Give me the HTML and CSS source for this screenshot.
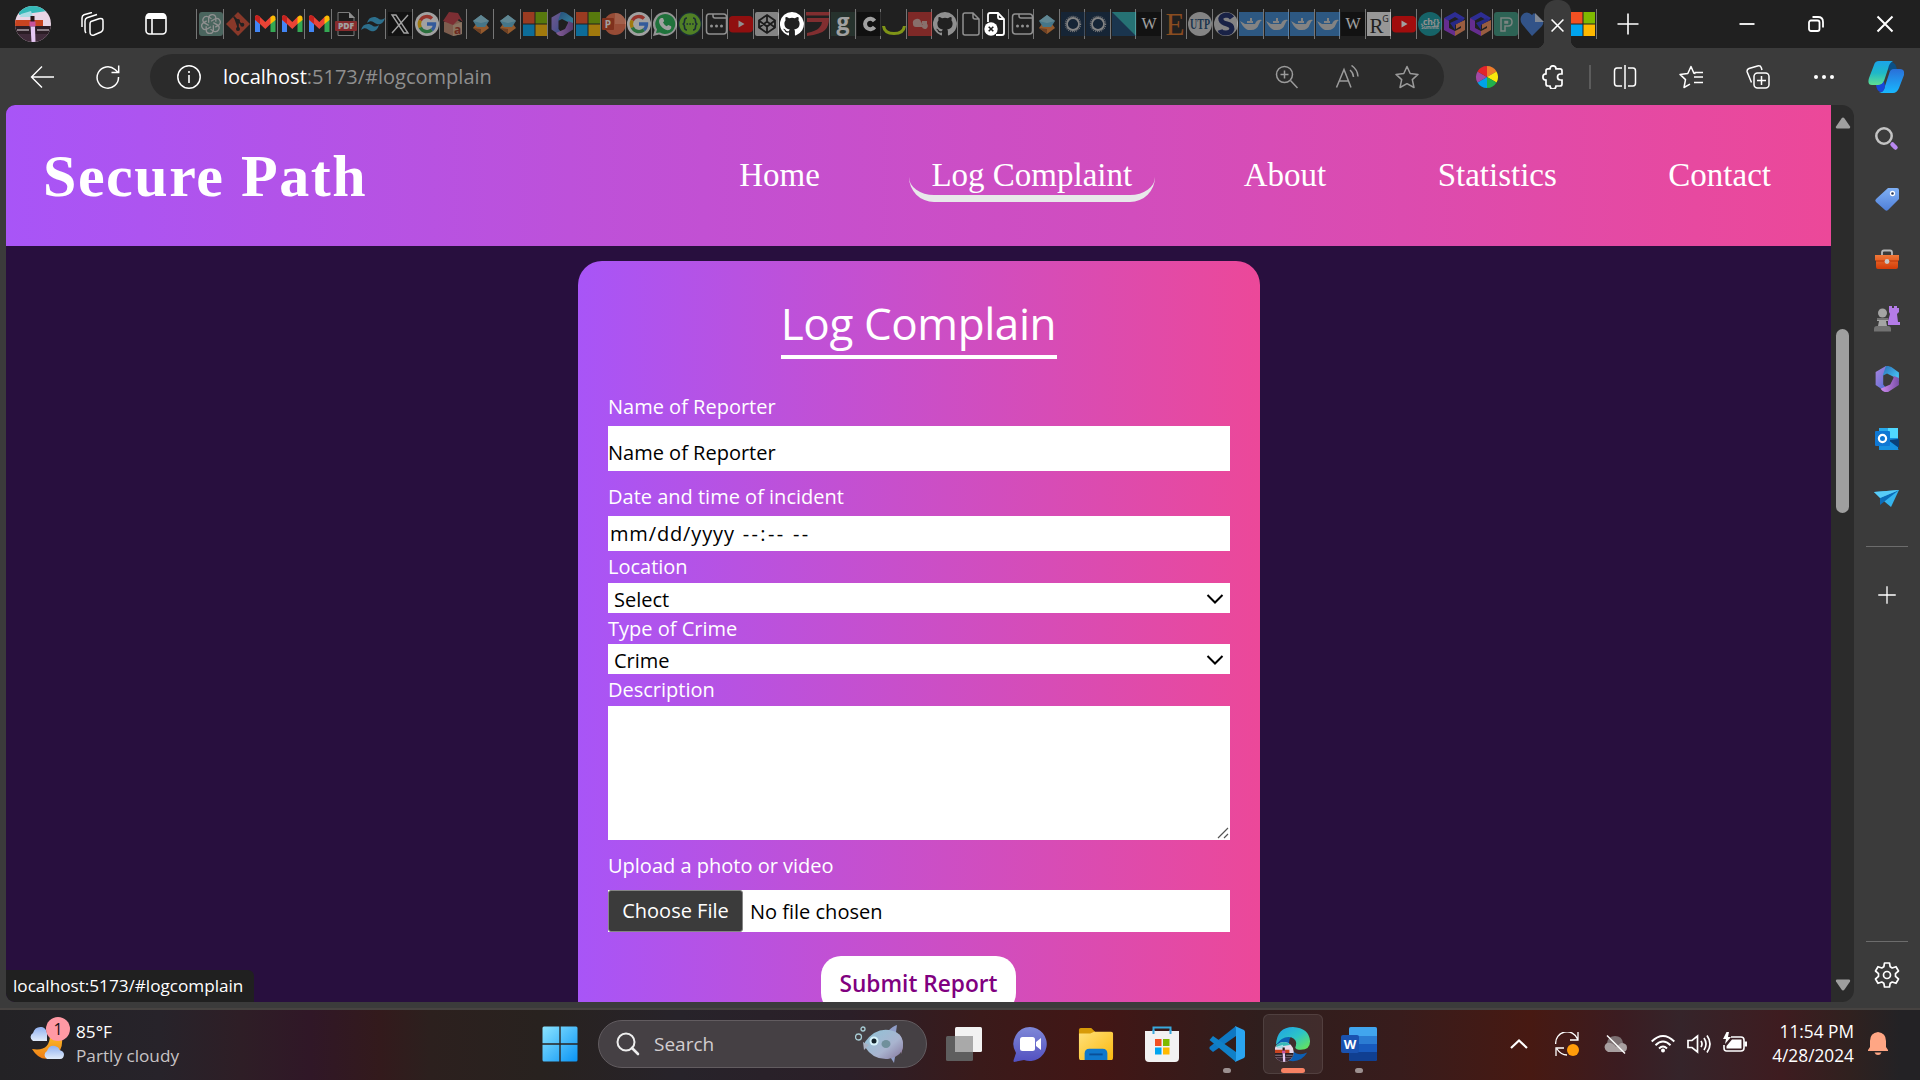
FILE: index.html
```html
<!DOCTYPE html>
<html lang="en">
<head>
<meta charset="utf-8">
<title>Secure Path</title>
<link rel="stylesheet" href="styles.css">
</head>
<body>
<svg class="defs" width="0" height="0" aria-hidden="true">
  <defs>
    <clipPath id="cp"><circle cx="18" cy="18" r="18"/></clipPath>
    <linearGradient id="g-purple" x1="0" y1="0" x2="1" y2="1"><stop offset="0" stop-color="#a884e0"/><stop offset=".5" stop-color="#7f78d8"/><stop offset="1" stop-color="#2f6fd8"/></linearGradient>
    <linearGradient id="g-cyan" x1="0" y1="0" x2="1" y2="1"><stop offset="0" stop-color="#2a6fb8"/><stop offset="1" stop-color="#4bd3ff"/></linearGradient>
    <linearGradient id="g-violet" x1="0" y1="0" x2="1" y2="0"><stop offset="0" stop-color="#d08cf0"/><stop offset="1" stop-color="#7a4fa8"/></linearGradient>
    <linearGradient id="g-tag" x1="0" y1="0" x2="0" y2="1"><stop offset="0" stop-color="#7fb0f5"/><stop offset="1" stop-color="#4f7fd8"/></linearGradient>
    <linearGradient id="g-box" x1="0" y1="0" x2="0" y2="1"><stop offset="0" stop-color="#f07838"/><stop offset="1" stop-color="#d23c08"/></linearGradient>
    <linearGradient id="g-cop1" x1="0" y1="0" x2="0" y2="1"><stop offset="0" stop-color="#1ba4ea"/><stop offset=".5" stop-color="#1fb8c8"/><stop offset="1" stop-color="#5fe090"/></linearGradient>
    <linearGradient id="g-cop2" x1="0" y1="0" x2="0" y2="1"><stop offset="0" stop-color="#2a6fd8"/><stop offset="1" stop-color="#18b8ff"/></linearGradient>
    <linearGradient id="g-win" x1="0" y1="0" x2="1" y2="1"><stop offset="0" stop-color="#8be4ff"/><stop offset="1" stop-color="#0a94f5"/></linearGradient>
    <linearGradient id="g-chat" x1="0" y1="0" x2="0" y2="1"><stop offset="0" stop-color="#7f88d8"/><stop offset="1" stop-color="#5250c0"/></linearGradient>
    <linearGradient id="g-folder" x1="0" y1="0" x2="1" y2="1"><stop offset="0" stop-color="#ffe07a"/><stop offset="1" stop-color="#fbb90e"/></linearGradient>
    <linearGradient id="g-edge" x1="0" y1="0" x2="1" y2="1"><stop offset="0" stop-color="#1e9fe8"/><stop offset=".5" stop-color="#2cc4c8"/><stop offset="1" stop-color="#6fe84a"/></linearGradient>
    <linearGradient id="g-cloud" x1="0" y1="0" x2="0" y2="1"><stop offset="0" stop-color="#8fb0f0"/><stop offset="1" stop-color="#e0ebfa"/></linearGradient>
    <linearGradient id="g-moon" x1="0" y1="0" x2="0" y2="1"><stop offset="0" stop-color="#fcc02c"/><stop offset="1" stop-color="#f07d14"/></linearGradient>
    <linearGradient id="g-fish" x1="0" y1="0" x2="1" y2="1"><stop offset="0" stop-color="#8fc4d8"/><stop offset=".6" stop-color="#a9b4cf"/><stop offset="1" stop-color="#84769c"/></linearGradient>
  </defs>
</svg>
<svg class="symbols" aria-hidden="true">
  <symbol id="avatar" viewBox="0 0 36 36"><g clip-path="url(#cp)"><path fill="#e9d6e6" d="M0 0h36v36H0z"/><path fill="#35b9b8" d="M4 0h28v5L4 9z"/><path fill="#a9dbe4" d="M6 8l10-3 2 6H5z"/><path fill="#c74420" d="M0 14h28v6H0z"/><path fill="#2b1d25" d="M0 20h36v8H0z"/><path fill="#8a7f86" d="M2 23h12v2H2zM22 23h12v2H22z"/><path fill="#402b3a" d="M0 28h36v8H0z"/><path fill="#2a1718" d="M15.500 10h4v6h-4z"/><path fill="#c9529a" d="M14.500 15.500h6v5h-6z"/><path fill="#e6c8f4" d="M15.500 20.500h4.500l.5 15.500h-4z"/></g></symbol>
  <symbol id="gpt" viewBox="0 0 24 24"><rect width="24" height="24" rx="3" fill="#74aa9c"/><g fill="none" stroke="#fff" stroke-width="1.3"><path id="petal" d="M12 9.3l4.3-2.5a3.6 3.6 0 0 1 3.4 6.3l-3.4 2"/><use href="#petal" transform="rotate(60 12 12)"/><use href="#petal" transform="rotate(120 12 12)"/><use href="#petal" transform="rotate(180 12 12)"/><use href="#petal" transform="rotate(240 12 12)"/><use href="#petal" transform="rotate(300 12 12)"/></g></symbol>
  <symbol id="git" viewBox="0 0 24 24"><path fill="#f05033" d="M12 0l12 12-12 12L0 12z"/><g stroke="#222" stroke-width="1.7" fill="#222"><path d="M7.500 4.500L12 9v8M12 9l4 4"/><circle cx="12" cy="9" r="1.2"/><circle cx="12" cy="17" r="1.2"/><circle cx="16.3" cy="12.8" r="1.2"/></g></symbol>
  <symbol id="gmail" viewBox="0 0 24 24"><path fill="#4285f4" d="M2 7v13h5V11z"/><path fill="#34a853" d="M22.500 7v13h-5V11z"/><path fill="#ea4335" d="M2 8V5c0-2 2-2 4-1l6.300 6 6.200-6v7l-6.200 6L7 12z"/><path fill="#c5221f" d="M2 7.500V6c0-3 3-3 5-1v7z"/><path fill="#fbbc04" d="M17.500 5c2-2.500 5-2 5 1v2l-5 4z"/></symbol>
  <symbol id="pdf" viewBox="0 0 24 24"><path fill="#181818" stroke="#bbb" d="M4 .5h11l5 5v18H4z"/><path fill="#ddd" d="M15 0v6h6z"/><rect x="1" y="9" width="22" height="10" rx="1" fill="#d03438"/><text x="12" y="17" font-family="Open Sans" font-size="8.500" font-weight="800" fill="#fff" text-anchor="middle">PDF</text></symbol>
  <symbol id="tailwind" viewBox="0 0 24 24"><path fill="#38bdf8" d="M6 11q1.500-6 7-6c5 0 5 5 11 1-1.500 6-6 7-8 6-4-1-5-5-10-1zM0 18q1.500-6 7-6c5 0 5 5 11 1-1.500 6-6 7-8 6-4-1-5-5-10-1z"/></symbol>
  <symbol id="x" viewBox="0 0 24 24"><path fill="#080808" d="M0 0h24v24H0z"/><path fill="none" stroke="#fff" stroke-width="1.400" d="M4 3h4l12 18h-4zM20 3L4 21"/></symbol>
  <symbol id="google" viewBox="0 0 24 24"><circle cx="12" cy="12" r="12" fill="#fff"/><g fill="none" stroke-width="3.400"><path stroke="#ea4335" d="M5.300 8.500A7.500 7.500 0 0 1 17 6.500"/><path stroke="#fbbc05" d="M5.300 8.400a7.500 7.500 0 0 0 0 7.200"/><path stroke="#34a853" d="M5.300 15.500A7.500 7.500 0 0 0 17 17.700"/><path stroke="#4285f4" d="M12 12h7.500q0 3.800-2.600 5.800"/></g></symbol>
  <symbol id="house" viewBox="0 0 24 24"><path fill="#d99a7c" d="M2 10l10-4 8 5v11l-9 2-9-4z"/><path fill="#f2c4a0" d="M11 13l9-3v12l-9 2z"/><path fill="#d83c46" d="M1 9L7 0l9 1 5 9-4-3-6 6z"/><text x="15.500" y="22" font-family="Open Sans" font-size="12" font-weight="700" fill="#b8331e" text-anchor="middle">a</text></symbol>
  <symbol id="stack" viewBox="0 0 24 24"><path fill="#e88437" d="M4 16l3-4h10l3 4-8 6z"/><path fill="#a85a28" d="M4 16l8 1v5z"/><path fill="#63b4d4" d="M4 9l8-6 8 6-4 6H8z"/><path fill="#8fd0e4" d="M4 9l8-6 8 6-8 2z"/></symbol>
  <symbol id="ms" viewBox="0 0 24 24"><path fill="#f25022" d="M0 0h11.500v11.500H0z"/><path fill="#7fba00" d="M12.500 0H24v11.500H12.500z"/><path fill="#00a4ef" d="M0 12.500h11.500V24H0z"/><path fill="#ffb900" d="M12.500 12.500H24V24H12.500z"/></symbol>
  <symbol id="m365" viewBox="0 0 24 24"><path fill="url(#g-purple)" d="M11 0L1.500 5.500v12L8 22l3-2-2.500-3V8L14 5z"/><path fill="url(#g-cyan)" d="M11 0q2-.5 5 1l7 5v8l-5-4-6-3-4 2z"/><path fill="url(#g-violet)" d="M23 11v6.500L13 24q-4 1-7-3l9-4 3-6V9z"/></symbol>
  <symbol id="ppt" viewBox="0 0 24 24"><circle cx="13" cy="12" r="11" fill="#ed6c47"/><path fill="#ff8f6b" d="M13 1a11 11 0 0 1 11 11H13z"/><rect y="6" width="12" height="12" rx="1" fill="#c43e1c"/><text x="6" y="15.700" font-family="Open Sans" font-size="10" font-weight="700" fill="#fff" text-anchor="middle">P</text></symbol>
  <symbol id="whatsapp" viewBox="0 0 24 24"><path fill="#e8e8e8" d="M12 0a12 12 0 1 1-6 22.400L0 24l1.600-6A12 12 0 0 1 12 0z"/><path fill="#1fae50" d="M12 2a10 10 0 1 1-5 18.500L3 21l1-3.500A10 10 0 0 1 12 2z"/><path fill="#fff" d="M8 6l2 0 1.200 3-1.200 1.500q1.200 2.500 3.700 3.700L15.200 13l3 1.300v2q-1 2-3.500 2C10 17.500 6 13 6 9q0-2 2-3z"/></symbol>
  <symbol id="swagger" viewBox="0 0 24 24"><circle cx="12" cy="12" r="12" fill="#173647"/><circle cx="12" cy="12" r="10.700" fill="#74c629"/><path fill="none" stroke="#173647" stroke-width="1.600" d="M9 6q-2.500 0-2.500 3t-2 3q2 0 2 3t2.500 3M15 6q2.500 0 2.500 3t2 3q-2 0-2 3T15 18"/><path stroke="#173647" stroke-width="1.600" stroke-dasharray="1.600 1.200" d="M8.500 12h8"/></symbol>
  <symbol id="tabdots" viewBox="0 0 24 24"><g fill="none" stroke="#fff" stroke-width="1.500"><path d="M9 2H5Q2.500 2 2.500 5v14q0 3 3 3h14q3 0 3-3V5q0-3-3-3H9v2q0 2 2 2h11"/></g><g fill="#fff"><circle cx="7.500" cy="14" r="1.500"/><circle cx="12.500" cy="14" r="1.500"/><circle cx="17.500" cy="14" r="1.500"/></g></symbol>
  <symbol id="youtube" viewBox="0 0 24 24"><rect y="4" width="24" height="16.500" rx="4" fill="#f00"/><path fill="#fff" d="M9.500 8.500v7l6-3.500z"/></symbol>
  <symbol id="codepen" viewBox="0 0 24 24"><rect width="24" height="24" rx="2" fill="#e8e8e8"/><path fill="none" stroke="#181818" stroke-width="1.800" d="M12 3l8 5.500v7L12 21l-8-5.500v-7zM12 3v6M12 21v-6M4 8.500l8 6 8-6M4 15.500l8-6 8 6"/></symbol>
  <symbol id="github" viewBox="0 0 24 24"><path fill="#fff" d="M12 0a12 12 0 0 0-3.800 23.400c.6.1.8-.3.8-.6v-2.200c-3.300.7-4-1.400-4-1.400-.5-1.400-1.300-1.800-1.300-1.800-1.100-.7.100-.7.100-.7 1.200.1 1.800 1.200 1.800 1.200 1.100 1.800 2.800 1.300 3.500 1 .1-.8.400-1.300.8-1.600-2.700-.3-5.500-1.300-5.500-5.900 0-1.300.5-2.400 1.200-3.200-.1-.3-.5-1.500.1-3.200 0 0 1-.3 3.300 1.200a11.500 11.500 0 0 1 6 0C17.300 4.700 18.300 5 18.300 5c.7 1.700.3 2.900.1 3.200.8.800 1.200 1.900 1.200 3.200 0 4.600-2.800 5.600-5.500 5.900.4.400.8 1.100.8 2.200v3.300c0 .3.200.7.800.6A12 12 0 0 0 12 0z"/></symbol>
  <symbol id="stripe" viewBox="0 0 24 24"><path fill="#e23c40" d="M0 0h24l-1 3.500H0zM1 6h22q0 8-4 12t-18 6v-3q9-2 12-5t3-6H1z"/></symbol>
  <symbol id="gg" viewBox="0 0 24 24"><path fill="#2c3f37" d="M0 0h24v24H0z"/><text x="12" y="17.500" font-family="Open Sans" font-size="23" font-weight="700" fill="#fff" text-anchor="middle">g</text></symbol>
  <symbol id="cc" viewBox="0 0 24 24"><path fill="#050505" d="M0 0h24v24H0z"/><path fill="none" stroke="#fff" stroke-width="4" d="M17.500 9a5.200 5.200 0 1 0 0 6"/></symbol>
  <symbol id="smile" viewBox="0 0 24 24"><path fill="#c4e812" d="M0 14h3q1 6 9 6t9-6h3q-1 9-12 9T0 14z"/></symbol>
  <symbol id="blob" viewBox="0 0 24 24"><path fill="#dc322f" d="M0 0h24v24H0z"/><path fill="#efc0b8" d="M5 12a4 4 0 0 1 8-2q1 0 1 3a3 3 0 1 1 0 2H8q-3 0-3-3zM14 9h5v3h-5z"/></symbol>
  <symbol id="file" viewBox="0 0 24 24"><path fill="none" stroke="#fff" stroke-width="1.500" d="M6 1h8l6 6v14q0 2-2 2H6q-2 0-2-2V3q0-2 2-2zM14 1v4q0 2 2 2h4"/></symbol>
  <symbol id="filex" viewBox="0 0 24 24"><path fill="none" stroke="#fff" stroke-width="1.800" d="M4 10V3q0-2 2-2h8l6 6v14q0 2-2 2h-6M14 1v4q0 2 2 2h4"/><circle cx="7" cy="17" r="6.700" fill="#fff"/><path stroke="#222" stroke-width="1.600" d="M4.700 14.700l4.600 4.600M9.300 14.700l-4.600 4.600"/></symbol>
  <symbol id="ring" viewBox="0 0 24 24"><path fill="#0e2a4c" d="M0 0h24v24H0z"/><circle cx="12" cy="12" r="6" fill="none" stroke="#e8e8e8" stroke-width="1.800"/><circle cx="12" cy="12" r="7.600" fill="none" stroke="#d8d8d8" stroke-width="1.200" stroke-dasharray="1 1"/></symbol>
  <symbol id="tri" viewBox="0 0 24 24"><path fill="#154a7c" d="M0 0h24v24H0z"/><path fill="#2cc4c8" d="M0 0h24v24z"/></symbol>
  <symbol id="ww" viewBox="0 0 24 24"><path fill="#080808" d="M0 0h24v24H0z"/><text x="12" y="17" font-family="Liberation Serif" font-size="16" fill="#fff" text-anchor="middle">W</text></symbol>
  <symbol id="ee" viewBox="0 0 24 24"><text x="12" y="22.500" font-family="Liberation Serif" font-size="32" fill="#f47a20" text-anchor="middle" textLength="19" lengthAdjust="spacingAndGlyphs">E</text></symbol>
  <symbol id="utp" viewBox="0 0 24 24"><circle cx="12" cy="12" r="12" fill="#e8e8e8"/><text x="12" y="16.500" font-family="Liberation Serif" font-size="14" font-weight="700" fill="#174a78" text-anchor="middle" textLength="20" lengthAdjust="spacingAndGlyphs">UTP</text></symbol>
  <symbol id="ss" viewBox="0 0 24 24"><circle cx="12" cy="12" r="12" fill="#e8e8e8"/><path fill="none" stroke="#14246c" stroke-width="5" d="M18 6q-2-3-6-3-6 1-5 5 1 3 6 4t5 5q-1 4-6 4-5 0-6-3"/></symbol>
  <symbol id="docker" viewBox="0 0 24 24"><path fill="#3a90e4" d="M0 0h24v24H0z"/><path fill="#e6e6e6" d="M1 9l5 3h10q2-5 7-4-2 1-3 4-2 6-8 6H9q-4-1-8-9zM8 9h6v2H8zM11 6h2v3h-2z"/></symbol>
  <symbol id="rg" viewBox="0 0 24 24"><path fill="#eee" d="M0 0h24v24H0z"/><text x="9.500" y="21" font-family="Liberation Serif" font-size="21" fill="#222" text-anchor="middle">R</text><text x="18.500" y="10" font-family="Open Sans" font-size="9" fill="#222" text-anchor="middle">G</text></symbol>
  <symbol id="ch" viewBox="0 0 24 24"><circle cx="12" cy="12" r="12" fill="#0ea5b0"/><text x="12" y="12.500" font-family="Open Sans" font-size="8.500" font-weight="700" fill="#fff" text-anchor="middle">.ch{}</text><text x="12" y="17" font-family="Open Sans" font-size="4.500" font-weight="700" fill="#fff" text-anchor="middle">Summit</text></symbol>
  <symbol id="gcube" viewBox="0 0 24 24"><path fill="#3838e8" d="M12 0l10 6-3 3-7-4-7 4-4-3z"/><path fill="#9838e0" d="M1 6l5 3v7l6 3v5L1 18z"/><path fill="#f08a58" d="M12 19l6-3v-2l-5 3v-5l9-4v10l-10 6z"/><path fill="#2c30d0" d="M7 11l11-5 3 2-9 5v5z"/></symbol>
  <symbol id="pp" viewBox="0 0 24 24"><rect width="24" height="24" rx="3" fill="#3ba58b"/><path fill="none" stroke="#d8e8e2" stroke-width="1.500" d="M7 6h7q4 0 4 4t-4 4h-3v5H7zM11 9.500h2.500v1.500H11z"/></symbol>
  <symbol id="heart" viewBox="0 0 24 24"><path fill="#3f78d4" d="M12 24L2 12Q-1 7 2 3q5-5 10 0l2-2 9 9q1 1-1 4z"/><path fill="#c8d4e8" d="M15 1v9h9z"/></symbol>

  <symbol id="workspaces" viewBox="0 0 24 24"><g fill="none" stroke="#fff" stroke-width="1.500"><path d="M11 9.500l8-2.800q4-1 4 2.300v8q0 2-2 3l-7 3q-4 1-4-3v-8q0-2 1-2.500zM6 21q-1-1-1-3V9q0-2.500 2-3.300L17 2.500M2 15V6q0-2.500 2-3.300L12 .5"/></g></symbol>
  <symbol id="vtabs" viewBox="0 0 24 24"><rect x="2" y="2" width="20" height="20" rx="3.500" fill="none" stroke="#fff" stroke-width="1.600"/><path fill="#fff" d="M2 7V5q0-4 4-4h12q4 0 4 4v2z"/><path stroke="#fff" stroke-width="1.600" d="M8 7v15"/></symbol>
  <symbol id="back" viewBox="0 0 24 24"><path fill="none" stroke="#fff" stroke-width="1.400" d="M12 1.500L1.500 12 12 22.500M1.500 12H24"/></symbol>
  <symbol id="reload" viewBox="0 0 24 24"><path fill="none" stroke="#fff" stroke-width="1.500" d="M22.500 12A10.700 10.700 0 1 1 19 4.500l3 2.800M22.700.5v7H15.500"/></symbol>
  <symbol id="info" viewBox="0 0 24 24"><circle cx="12" cy="12" r="11.200" fill="none" stroke="#fff" stroke-width="1.500"/><path stroke="#fff" stroke-width="1.600" d="M12 10v8M12 6v2"/></symbol>
  <symbol id="zoomin" viewBox="0 0 24 24"><g fill="none" stroke="#9b9b9b" stroke-width="1.500"><circle cx="9.500" cy="9.500" r="8"/><path d="M15.500 15.500L22.500 23M9.500 5.500v8M5.500 9.500h8"/></g></symbol>
  <symbol id="aloud" viewBox="0 0 24 24"><path fill="none" stroke="#9b9b9b" stroke-width="1.500" d="M1.500 22.500L9 4.500l7 18M4.500 16h9M15 5q3.500 3 3.500 7M16.500.500q6 4 6.500 11"/></symbol>
  <symbol id="star" viewBox="0 0 24 24"><path fill="none" stroke="#9b9b9b" stroke-width="1.500" stroke-linejoin="round" d="M12 1.500l3.200 7 7.800.9-5.700 5.200L19 22.500 12 18.700 5 22.500l1.700-7.900L1 9.400l7.800-.9z"/></symbol>
  <symbol id="wheel" viewBox="0 0 24 24"><path fill="#ee7c2b" d="M12 12V1a11 11 0 0 1 9.500 5.500z"/><path fill="#fbe80c" d="M12 12l9.500-5.500a11 11 0 0 1 0 11z"/><path fill="#22b14c" d="M12 12l9.500 5.500A11 11 0 0 1 12 23z"/><path fill="#00a2e8" d="M12 12v11a11 11 0 0 1-9.500-5.500z"/><path fill="#a349a4" d="M12 12l-9.500 5.500a11 11 0 0 1 0-11z"/><path fill="#e2242c" d="M12 12L2.500 6.500A11 11 0 0 1 12 1z"/></symbol>
  <symbol id="puzzle" viewBox="0 0 24 24"><path fill="none" stroke="#fff" stroke-width="1.700" d="M9 3.800a3 3 0 0 1 6 0h4q2 0 2 2V9h-1.500a2.800 2.800 0 0 0 0 6H21v4q0 2-2 2h-4a3 3 0 0 1-6 0H7q-2 0-2-2v-4a3 3 0 0 1 0-6.200V5.800q0-2 2-2z"/></symbol>
  <symbol id="split" viewBox="0 0 24 24"><path fill="none" stroke="#fff" stroke-width="1.500" d="M9 3H4Q1.500 3 1.500 6v12q0 3 2.500 3h5M15 3h5q2.500 0 2.500 3v12q0 3-2.500 3h-5M12 0v24"/></symbol>
  <symbol id="favs" viewBox="0 0 24 24"><path fill="none" stroke="#fff" stroke-width="1.500" stroke-linejoin="round" d="M16.500 8.500l-1.600-.2L12 1.500l-3.200 7L1 9.400l5.500 5.200L5 22.500l6-3.300M15 12h9M15.500 7.500H24M15 17.500h9"/></symbol>
  <symbol id="collect" viewBox="0 0 24 24"><g fill="none" stroke="#fff" stroke-width="1.500"><rect x="8" y="8" width="15" height="15" rx="3.500"/><path d="M15.500 11v9M11 15.500h9M5.500 17.500L1.200 7Q.5 4.500 3 3.500L11.500 1q3-.7 3.800 1.700L16 5"/></g></symbol>
  <symbol id="dots" viewBox="0 0 24 24"><g fill="#fff"><circle cx="4" cy="12" r="2"/><circle cx="12" cy="12" r="2"/><circle cx="20" cy="12" r="2"/></g></symbol>
  <symbol id="copilot" viewBox="0 0 36 34"><path fill="#0c4f84" d="M18 2h6q4 1 5 8l-8 1z"/><path fill="url(#g-cop1)" d="M11 1h14q-4 2-5 8l-4 12q-1 4-5 4H4Q-1 25 1 18L6 5q1-4 5-4z"/><path fill="url(#g-cop2)" d="M26 9h6q5 0 4 6l-5 13q-2 5-6 5H11q5-1 6-7l4-12q1-5 5-5z"/><path fill="#1748d8" d="M10 25q4 0 6-4l1 5q-1 6-4 6-4 0-5-7z"/></symbol>
  <symbol id="close" viewBox="0 0 24 24"><path stroke="#fff" stroke-width="2" d="M4.500 4.500l15 15M19.500 4.500l-15 15"/></symbol>
  <symbol id="plus" viewBox="0 0 24 24"><path stroke="#fff" stroke-width="1.600" d="M12 1.500v21M1.500 12h21"/></symbol>
  <symbol id="minus" viewBox="0 0 24 24"><path stroke="#fff" stroke-width="1.800" d="M4.500 12h15"/></symbol>
  <symbol id="restore" viewBox="0 0 24 24"><g fill="none" stroke="#fff" stroke-width="1.800"><rect x="5" y="8.500" width="10.500" height="10.500" rx="2"/><path d="M8.500 5H14q5 0 5 5v5.500"/></g></symbol>

  <symbol id="s-search" viewBox="0 0 26 26"><path stroke="#b888f0" stroke-width="4.500" stroke-linecap="round" d="M18.500 18.500l3 3"/><circle cx="10" cy="10" r="7.700" fill="none" stroke="#c4c4c4" stroke-width="2.500"/></symbol>
  <symbol id="s-tag" viewBox="0 0 26 26"><path fill="url(#g-tag)" d="M14 2h9q2 0 2 2v9L14 24q-1.500 1.500-3 0l-9-8q-1.500-1.500 0-3z"/><circle cx="18.500" cy="7.500" r="2" fill="#28385c" stroke="#fff" stroke-width="1.300"/></symbol>
  <symbol id="s-box" viewBox="0 0 26 26"><path fill="none" stroke="#b8b8b8" stroke-width="1.800" d="M8 9V6.500q0-2 2-2h6q2 0 2 2V9"/><path fill="url(#g-box)" d="M1 9h24v5l-1 1v6q0 2-2 2H4q-2 0-2-2v-6l-1-1z"/><path fill="#b83408" d="M2 14.500h22v1H2z"/><circle cx="13" cy="15.500" r="2.400" fill="#c8c8c8"/></symbol>
  <symbol id="s-chess" viewBox="0 0 26 26"><path fill="#b47ce8" d="M15 0h3v2h2V0h3v2h2v4l-2 2 1 8h2v3H14v-4l2-7-1-2z"/><g fill="#a4a4a4"><circle cx="8.500" cy="7" r="4.500"/><path d="M3 12h11v3h-2l1 5H4l1-5H3z"/></g><path fill="#727272" d="M0 23q0-3 3-3h11q3 0 3 3v2.500H0zM3 12h11v2H3z"/></symbol>
  <symbol id="s-outlook" viewBox="0 0 26 26"><path fill="#1490df" d="M5 2h19v22H5z"/><path fill="#50d9ff" d="M14 2h10v10H14z"/><path fill="#28a8ea" d="M5 2h9v8H5z"/><path fill="#0a3f78" d="M14 14l11 8V13z"/><path fill="#1590e0" d="M5 22l10-6 10 8H7z"/><rect x="1" y="5" width="15" height="15" rx="1" fill="#0f78d4"/><circle cx="8.500" cy="12.500" r="3.600" fill="none" stroke="#fff" stroke-width="2.200"/></symbol>
  <symbol id="s-send" viewBox="0 0 26 26"><path fill="#35b4ee" d="M0 6l25-2-8 17-6-5z"/><path fill="#0c6cb8" d="M0 6l6 6 19-8-14 11-5 4V12z"/><path fill="#58ccf8" d="M0 6l25-2L6 12z"/></symbol>
  <symbol id="s-gear" viewBox="0 0 26 26"><path fill="none" stroke="#fff" stroke-width="1.700" stroke-linejoin="round" d="M10.500 1h5l.7 3.800 2 1.200L22 4.700l2.500 4.300-3 2.600v2.800l3 2.600-2.500 4.300-3.800-1.300-2 1.200-.7 3.800h-5l-.7-3.800-2-1.200L4 21.300 1.500 17l3-2.600v-2.800l-3-2.600L4 4.700 7.800 6l2-1.200z"/><circle cx="13" cy="13" r="3.500" fill="none" stroke="#fff" stroke-width="1.700"/></symbol>

  <symbol id="weather" viewBox="0 0 36 36"><path fill="url(#g-moon)" d="M33 8q4 14-6 22-14 8-23-7 18 3 18-14z"/><path fill="url(#g-cloud)" d="M5 15a4.500 4.500 0 0 1 0-8q2-7 9-6 4 1 5 6v8z"/><path fill="url(#g-cloud)" d="M19 33a4.500 4.500 0 0 1 0-8q2-6 8-5 4 1 4.500 4 4 1 4.500 4 0 5-4 5z"/></symbol>
  <symbol id="windows" viewBox="0 0 36 36"><path fill="url(#g-win)" d="M2 .500h15.300v16.800H.500V2q0-1.500 1.500-1.500zM18.700.5H34q1.500 0 1.500 1.500v15.300H18.700zM.5 18.700h16.800v16.800H2q-1.500 0-1.500-1.500zM18.700 18.700h16.800V34q0 1.500-1.500 1.500H18.700z"/></symbol>
  <symbol id="mag" viewBox="0 0 24 24"><path stroke="#eee" stroke-width="2.600" stroke-linecap="round" d="M16 16l6 6"/><circle cx="10" cy="10" r="8.500" fill="none" stroke="#eee" stroke-width="2"/></symbol>
  <symbol id="fish" viewBox="0 0 54 38"><path fill="#8f9dc8" d="M33 6q5-5 9-6l-2 14zM34 30l5 8 2-12z"/><path fill="#a98bb4" d="M44 9q7 8 2 20z"/><path fill="url(#g-fish)" d="M10 17Q20 3 34 5q13 2 14 13 1 13-15 16-15 1-23-12z"/><path fill="#aab2c4" d="M8 17l6 3-5 5z"/><circle cx="19" cy="16" r="4.500" fill="#d8f4fc"/><circle cx="19" cy="16" r="2.500" fill="#14242c"/><ellipse cx="31" cy="19" rx="4.500" ry="4" fill="#70909c"/><g fill="none" stroke="#a8ccd4" stroke-width="1.300"><circle cx="3.500" cy="12" r="3"/><circle cx="8" cy="4" r="2"/></g></symbol>
  <symbol id="taskview" viewBox="0 0 36 36"><rect x="9" y="1" width="27" height="25" rx="1.500" fill="#f2f2f2"/><rect y="10" width="27" height="25" rx="1.500" fill="#5e5e5e"/><path fill="#a9a9a9" d="M9 10h18v16H9z"/></symbol>
  <symbol id="chat" viewBox="0 0 36 36"><path fill="url(#g-chat)" d="M18 1a17 17 0 1 1-6 33l-10 2q-1-1 0-3l2-6A17 17 0 0 1 18 1z"/><rect x="8" y="11" width="15" height="14" rx="2.500" fill="#fff"/><path fill="#fff" d="M24 16l5-4v12l-5-4z"/></symbol>
  <symbol id="folder" viewBox="0 0 38 36"><path fill="#d89a08" d="M1 8V3q0-2 2-2h11l4 4-4 4z"/><path fill="url(#g-folder)" d="M1 7h12l4-2h18q2 0 2 2v25q0 3-2 3H3q-2 0-2-3z"/><path fill="#1078cc" d="M7 35V28q0-5 5-5h14q5 0 5 5v7z"/><path fill="#0a4f98" d="M12 28h14v2H12z"/></symbol>
  <symbol id="store" viewBox="0 0 36 36"><path fill="none" stroke="#38a8dc" stroke-width="2" d="M9.500 8V1.500h17V8"/><path fill="#f2f2f2" d="M1 5h34v27q0 4-4 4H5q-4 0-4-4z"/><path fill="none" stroke="#38a8dc" stroke-width="2" d="M9.500 8V4M26.500 8V4"/><path fill="#f25022" d="M11 13h6.500v7H11z"/><path fill="#7fba00" d="M19 13h6.500v7H19z"/><path fill="#00a4ef" d="M11 21.500h6.500v7H11z"/><path fill="#ffb900" d="M19 21.500h6.500v7H19z"/></symbol>
  <symbol id="vscode" viewBox="0 0 36 36"><path fill="#0e78c4" d="M27 0v10L4 26l-3.500-3v-2z"/><path fill="#1080c8" d="M.5 14L4 10l23 16v10z"/><path fill="#2aa4f0" d="M26 0l9 4q1 1 1 2v24q0 1-1 2l-9 4q1-1 1-3V3q0-2-1-3z"/></symbol>
  <symbol id="edge" viewBox="0 0 38 38"><path fill="#0c5fb4" d="M2 20Q4 8 17 11q-5 6 1 14t16 3q-6 10-17 9Q2 34 2 20z"/><path fill="url(#g-edge)" d="M1 20Q2 1 19 1q17 1 18 15 0 10-12 9-5-1-3-4 2-6-5-9-9-2-16 8z"/><g transform="translate(-1 17) scale(.58)"><use href="#avatar" width="36" height="36"/></g></symbol>
  <symbol id="word" viewBox="0 0 36 36"><rect x="8" y="1" width="28" height="34" rx="2" fill="#185abd"/><path fill="#41a5ee" d="M10 1h24q2 0 2 2v7H8V3q0-2 2-2z"/><path fill="#2b7cd3" d="M8 10h28v8H8z"/><path fill="#103f91" d="M8 26h28v7q0 2-2 2H10q-2 0-2-2z"/><rect y="9" width="18" height="18" rx="2" fill="#1a52b0"/><text x="9" y="22.500" font-family="Open Sans" font-size="13" font-weight="700" fill="#fff" text-anchor="middle">W</text></symbol>

  <symbol id="t-up" viewBox="0 0 24 24"><path fill="none" stroke="#fff" stroke-width="2.200" d="M4 16l8-7.500 8 7.500"/></symbol>
  <symbol id="t-sync" viewBox="0 0 24 24"><path fill="none" stroke="#fff" stroke-width="1.300" d="M.7 12A11.300 11.300 0 0 1 22.500 7M23 0v8h-8M1 24v-8h8M2 17q4 6 10 6"/><circle cx="18" cy="18" r="6" fill="#ff9c0a"/></symbol>
  <symbol id="t-cloud" viewBox="0 0 24 24"><path fill="#7c7072" d="M4 11q1-7 8-7t8 7v5H4z"/><path fill="#a89fa0" d="M5 20a5 5 0 0 1-1-9q5-1 9 4l5-4q6 0 6 4.500T19 20z"/><path stroke="#fff" stroke-width="1.400" d="M4 3.500l18 18"/></symbol>
  <symbol id="t-wifi" viewBox="0 0 24 24"><g fill="none" stroke="#fff" stroke-width="1.900"><path d="M.7 9.500Q12-1.500 23.300 9.500M4.500 13.200q7.500-7.400 15 0M8 16.500q4-4 8 0"/></g><circle cx="12" cy="18.500" r="2" fill="#fff"/></symbol>
  <symbol id="t-vol" viewBox="0 0 24 24"><g fill="none" stroke="#fff" stroke-width="1.700"><path d="M1 8.500h4L10.500 4v16L5 15.500H1zM14 9q2 3 0 6M17 6q4 6 0 12M20 3.500q6 8.500 0 17"/></g></symbol>
  <symbol id="t-bat" viewBox="0 0 24 24"><path fill="none" stroke="#fff" stroke-width="1.600" d="M8 5h10q3 0 3 3v8q0 3-3 3H3.500Q1 19 1 16v-3"/><path fill="#fff" d="M9 7.500h9.500v9H3.500V14zM21.500 9.500H24v5h-2.500zM3.500 0L0 7h3l-1 5 6-7H5l1-5z"/></symbol>
  <symbol id="t-bell" viewBox="0 0 24 24"><path fill="#ffa684" d="M12 0q8 1 8 9v6l2 3v1H2v-1l2-3V9q0-8 8-9zM8.500 20.500h7q-1 2.500-3.500 2.500t-3.500-2.500z"/></symbol>
</svg>

<header class="titlebar">
  <svg class="avatar"><use href="#avatar"/></svg>
  <svg class="i24 ws"><use href="#workspaces"/></svg>
  <svg class="i24 vt"><use href="#vtabs"/></svg>
  <nav class="tabs">
    <span class="tab wide dim"><svg><use href="#gpt"/></svg></span>
    <span class="tab wide dim"><svg><use href="#git"/></svg></span>
    <span class="tab wide"><svg><use href="#gmail"/></svg></span>
    <span class="tab wide"><svg><use href="#gmail"/></svg></span>
    <span class="tab wide"><svg><use href="#gmail"/></svg></span>
    <span class="tab wide soft"><svg><use href="#pdf"/></svg></span>
    <span class="tab wide dim"><svg><use href="#tailwind"/></svg></span>
    <span class="tab wide soft"><svg><use href="#x"/></svg></span>
    <span class="tab wide soft"><svg><use href="#google"/></svg></span>
    <span class="tab wide dim"><svg><use href="#house"/></svg></span>
    <span class="tab wide soft"><svg><use href="#stack"/></svg></span>
    <span class="tab wide soft"><svg><use href="#stack"/></svg></span>
    <span class="tab wide soft"><svg><use href="#ms"/></svg></span>
    <span class="tab wide soft"><svg><use href="#m365"/></svg></span>
    <span class="tab soft"><svg><use href="#ms"/></svg></span>
    <span class="tab soft"><svg><use href="#ppt"/></svg></span>
    <span class="tab soft"><svg><use href="#google"/></svg></span>
    <span class="tab soft"><svg><use href="#whatsapp"/></svg></span>
    <span class="tab soft"><svg><use href="#swagger"/></svg></span>
    <span class="tab dim"><svg><use href="#tabdots"/></svg></span>
    <span class="tab dim"><svg><use href="#youtube"/></svg></span>
    <span class="tab dim"><svg><use href="#codepen"/></svg></span>
    <span class="tab"><svg><use href="#github"/></svg></span>
    <span class="tab dim"><svg><use href="#stripe"/></svg></span>
    <span class="tab soft"><svg><use href="#gg"/></svg></span>
    <span class="tab soft"><svg><use href="#cc"/></svg></span>
    <span class="tab soft"><svg><use href="#smile"/></svg></span>
    <span class="tab dim"><svg><use href="#blob"/></svg></span>
    <span class="tab dim"><svg><use href="#github"/></svg></span>
    <span class="tab dim"><svg><use href="#file"/></svg></span>
    <span class="tab"><svg><use href="#filex"/></svg></span>
    <span class="tab dim"><svg><use href="#tabdots"/></svg></span>
    <span class="tab soft"><svg><use href="#stack"/></svg></span>
    <span class="tab dim"><svg><use href="#ring"/></svg></span>
    <span class="tab dim"><svg><use href="#ring"/></svg></span>
    <span class="tab dim"><svg><use href="#tri"/></svg></span>
    <span class="tab soft"><svg><use href="#ww"/></svg></span>
    <span class="tab dim"><svg><use href="#ee"/></svg></span>
    <span class="tab dim"><svg><use href="#utp"/></svg></span>
    <span class="tab dim"><svg><use href="#ss"/></svg></span>
    <span class="tab dim"><svg><use href="#docker"/></svg></span>
    <span class="tab dim"><svg><use href="#docker"/></svg></span>
    <span class="tab dim"><svg><use href="#docker"/></svg></span>
    <span class="tab dim"><svg><use href="#docker"/></svg></span>
    <span class="tab soft"><svg><use href="#ww"/></svg></span>
    <span class="tab soft"><svg><use href="#rg"/></svg></span>
    <span class="tab soft"><svg><use href="#youtube"/></svg></span>
    <span class="tab dim"><svg><use href="#ch"/></svg></span>
    <span class="tab soft"><svg><use href="#gcube"/></svg></span>
    <span class="tab soft"><svg><use href="#gcube"/></svg></span>
    <span class="tab dim"><svg><use href="#pp"/></svg></span>
    <span class="tab soft last"><svg><use href="#heart"/></svg></span>
    <span class="tab active"><svg class="tab-x"><use href="#close"/></svg></span>
    <span class="tab after"><svg><use href="#ms"/></svg></span>
  </nav>
  <svg class="i24 new-tab"><use href="#plus"/></svg>
  <div class="window-controls">
    <svg class="i24"><use href="#minus"/></svg>
    <svg class="i24"><use href="#restore"/></svg>
    <svg class="i24"><use href="#close"/></svg>
  </div>
</header>

<div class="toolbar">
  <svg class="i24 back"><use href="#back"/></svg>
  <svg class="i24 reload"><use href="#reload"/></svg>
  <div class="address">
    <svg class="i24"><use href="#info"/></svg>
    <span class="url"><b>localhost</b>:5173/#logcomplain</span>
    <div class="address-actions">
      <svg class="i24"><use href="#zoomin"/></svg>
      <svg class="i24"><use href="#aloud"/></svg>
      <svg class="i24"><use href="#star"/></svg>
    </div>
  </div>
  <svg class="i24 wheel"><use href="#wheel"/></svg>
  <svg class="i24 puzzle"><use href="#puzzle"/></svg>
  <span class="divider"></span>
  <div class="tools">
    <svg class="i24"><use href="#split"/></svg>
    <svg class="i24"><use href="#favs"/></svg>
    <svg class="i24"><use href="#collect"/></svg>
    <svg class="i24"><use href="#dots"/></svg>
  </div>
  <svg class="copilot"><use href="#copilot"/></svg>
</div>

<div class="workarea">
  <main class="page">
    <div class="site-header">
      <h1 class="brand">Secure Path</h1>
      <nav class="site-nav">
        <a>Home</a>
        <a class="current">Log Complaint</a>
        <a>About</a>
        <a>Statistics</a>
        <a>Contact</a>
      </nav>
    </div>
    <form class="card">
      <h2 class="card-title">Log Complain</h2>
      <label>Name of Reporter</label>
      <div class="field f-name">Name of Reporter</div>
      <label>Date and time of incident</label>
      <div class="field f-date">mm/dd/yyyy <span class="date-time">--:-- --</span></div>
      <label>Location</label>
      <div class="field f-select">Select<svg class="chev" viewBox="0 0 18 12"><path d="M1.500 2l7.500 7.500L16.500 2"/></svg></div>
      <label class="l-crime">Type of Crime</label>
      <div class="field f-select">Crime<svg class="chev" viewBox="0 0 18 12"><path d="M1.500 2l7.500 7.500L16.500 2"/></svg></div>
      <label>Description</label>
      <div class="field f-area"><svg class="grip" viewBox="0 0 12 12"><path d="M1 11L11 1M7 11l4-4"/></svg></div>
      <label>Upload a photo or video</label>
      <div class="field f-file"><span class="choose">Choose File</span><span class="nofile">No file chosen</span></div>
      <div class="submit">Submit Report</div>
    </form>
    <div class="status">localhost:5173/#logcomplain</div>
  </main>
  <div class="scrollbar">
    <svg class="arrow" viewBox="0 0 16 12"><path d="M8 .500Q8.800.5 9.500 1.500l5.500 8q.8 2-1 2H2q-1.800 0-1-2l5.500-8Q7.200.5 8 .500z"/></svg>
    <span class="thumb"></span>
    <svg class="arrow down" viewBox="0 0 16 12"><path d="M8 .500Q8.800.5 9.500 1.500l5.500 8q.8 2-1 2H2q-1.800 0-1-2l5.500-8Q7.200.5 8 .500z"/></svg>
  </div>
  <aside class="sidebar">
    <svg class="i26"><use href="#s-search"/></svg>
    <svg class="i26"><use href="#s-tag"/></svg>
    <svg class="i26"><use href="#s-box"/></svg>
    <svg class="i26"><use href="#s-chess"/></svg>
    <svg class="i26"><use href="#m365"/></svg>
    <svg class="i26"><use href="#s-outlook"/></svg>
    <svg class="i26"><use href="#s-send"/></svg>
    <span class="rule"></span>
    <svg class="add"><use href="#plus"/></svg>
    <span class="rule bottom"></span>
    <svg class="i26 gear"><use href="#s-gear"/></svg>
  </aside>
</div>

<footer class="taskbar">
  <div class="weather">
    <svg class="weather-icon"><use href="#weather"/></svg>
    <span class="badge">1</span>
    <div class="weather-text"><span>85°F</span><span class="cond">Partly cloudy</span></div>
  </div>
  <div class="apps">
    <svg class="start"><use href="#windows"/></svg>
    <div class="search"><svg class="i24"><use href="#mag"/></svg><span>Search</span><svg class="fish"><use href="#fish"/></svg></div>
    <div class="app"><svg><use href="#taskview"/></svg></div>
    <div class="app"><svg><use href="#chat"/></svg></div>
    <div class="app"><svg><use href="#folder"/></svg></div>
    <div class="app"><svg><use href="#store"/></svg></div>
    <div class="app running"><svg><use href="#vscode"/></svg></div>
    <div class="app focused"><svg><use href="#edge"/></svg></div>
    <div class="app running"><svg><use href="#word"/></svg></div>
  </div>
  <div class="tray">
    <svg class="i24 up"><use href="#t-up"/></svg>
    <svg class="i24"><use href="#t-sync"/></svg>
    <svg class="i24"><use href="#t-cloud"/></svg>
    <svg class="i24"><use href="#t-wifi"/></svg>
    <svg class="i24 vol"><use href="#t-vol"/></svg>
    <svg class="i24 bat"><use href="#t-bat"/></svg>
    <div class="clock"><span>11:54 PM</span><span>4/28/2024</span></div>
    <svg class="i24 bell"><use href="#t-bell"/></svg>
  </div>
</footer>
</body>
</html>
```
FILE: styles.css
```css
* { box-sizing: border-box; }
body {
  margin: 0;
  width: 1920px;
  height: 1080px;
  overflow: hidden;
  display: flex;
  flex-direction: column;
  background: #3b3b3b;
  color: #fff;
  font-family: "Open Sans", "Noto Sans", sans-serif;
  font-size: 20px;
}
svg { display: block; flex: none; }
.defs { position: absolute; }
.symbols { display: none; }
.i24 { width: 24px; height: 24px; }
.i26 { width: 26px; height: 26px; }

/* Title bar */
.titlebar { height: 48px; flex: none; display: flex; align-items: center; background: #202020; }
.avatar { width: 36px; height: 36px; margin-left: 15px; }
.ws { margin-left: 29px; }
.vt { margin-left: 40px; }
.tabs { display: flex; height: 48px; align-items: center; margin-left: 28px; }
.tab { width: 25.5px; height: 30px; padding-left: 1px; border-right: 1px solid #767676; display: flex; align-items: center; flex: none; }
.tab svg { width: 24px; height: 24px; }
.tab.wide { width: 27px; padding-left: 2px; }
.tab:first-child { width: 28px; border-left: 1px solid #767676; }
.tab.dim svg { opacity: .5; }
.tab.soft svg { opacity: .58; }
.tab.last { border-right-color: transparent; }
.tab.active {
  width: 27px; height: 48px; padding: 0; border: 0; justify-content: center;
  background: #3b3b3b; border-radius: 12px 12px 0 0; position: relative;
}
.tab.active::before, .tab.active::after { content: ""; position: absolute; bottom: 0; width: 8px; height: 8px; }
.tab.active::before { left: -8px; background: radial-gradient(circle at 0 0, transparent 8px, #3b3b3b 8.500px); }
.tab.active::after { right: -8px; background: radial-gradient(circle at 100% 0, transparent 8px, #3b3b3b 8.500px); }
.tab .tab-x { width: 19px; height: 19px; margin-top: 2px; }
.tab.after { padding: 0; }
.new-tab { margin-left: 19px; }
.window-controls { display: flex; gap: 45px; margin-left: auto; margin-right: 23px; }

/* Toolbar */
.toolbar { height: 57px; flex: none; display: flex; align-items: center; }
.back { margin-left: 30px; }
.reload { margin-left: 42px; }
.address { width: 1294px; height: 45px; margin-left: 30px; border-radius: 23px; background: #2b2b2b; display: flex; align-items: center; padding: 0 25px 0 27px; }
.url { margin-left: 22px; font-size: 20px; color: #8f8f8f; }
.url b { font-weight: 400; color: #fff; }
.address-actions { margin-left: auto; display: flex; gap: 36px; }
.wheel { margin-left: 31px; }
.puzzle { margin-left: 42px; }
.divider { width: 2px; height: 24px; margin-left: 24px; background: #5c5c5c; }
.tools { display: flex; gap: 42.300px; margin-left: 22px; }
.copilot { width: 36px; height: 34px; margin-left: 32.600px; }

/* Work area */
.workarea { height: 905px; flex: none; display: flex; padding-left: 6px; border-bottom: 2px solid #474341; }
.page { width: 1825px; height: 897px; overflow: hidden; position: relative; background: #280f3e; border-radius: 9px 0 0 9px; }
.site-header {
  height: 141px; display: flex; justify-content: space-between; align-items: flex-start;
  background: linear-gradient(90deg, #a855f7, #ec4899);
}
.brand { margin: 37px 0 0 37px; font: 700 60px/68px "Liberation Serif", serif; letter-spacing: 1.550px; }
.site-nav { display: flex; gap: 66.500px; margin: 50px 37.500px 0 0; font: 33px/40px "Liberation Serif", serif; }
.site-nav a { padding: 0 22.500px; height: 47px; border-bottom: 7px solid transparent; white-space: nowrap; }
.site-nav .current { border-bottom-color: #e8e8ea; border-radius: 0 0 25px 25px; }

.card {
  width: 682px; height: 780px; margin: 15px auto 0 572px; padding: 30px 30px 0; border-radius: 24px;
  background: linear-gradient(90deg, #a855f7, #ec4899); display: flex; flex-direction: column;
}
.card-title { align-self: center; width: 276px; height: 68px; margin: 0 1px 34px 0; border-bottom: 4px solid #fff; font-weight: 400; font-size: 44px; line-height: 64px; letter-spacing: -.4px; white-space: nowrap; text-align: center; }
.card label { height: 28px; line-height: 28px; white-space: nowrap; flex: none; }
.field { background: #fff; color: #000; flex: none; display: flex; align-items: center; white-space: nowrap; }
.f-name { height: 45px; margin: 5px 0 12px; padding-top: 7px; }
.f-date { height: 35px; margin: 5px 0 2px; padding-left: 2px; letter-spacing: .85px; }
.date-time { margin-left: 8px; letter-spacing: 2.350px; }
.f-select { height: 30px; margin: 2px 0; padding: 2px 6px 0; }
.card .l-crime { margin-bottom: -1px; }
.chev { width: 18px; height: 12px; margin: 0 0 1px auto; fill: none; stroke: #000; stroke-width: 2; }
.f-area { height: 134px; margin: 2px 0 12px; align-items: flex-end; justify-content: flex-end; padding: 1px; }
.grip { width: 12px; height: 12px; fill: none; stroke: #555; stroke-width: 1.200; }
.f-file { height: 42px; margin: 10px 0 24px; }
.choose { width: 135px; height: 42px; line-height: 40px; border: 1px solid #858585; border-radius: 3px; background: #3b3b3b; color: #fff; text-align: center; }
.nofile { margin-left: 7px; }
.submit { align-self: center; width: 195px; height: 57px; margin-right: 1px; flex: none; border-radius: 20px; background: #fff; color: #800080; font-size: 22.700px; font-weight: 600; line-height: 56px; text-align: center; white-space: nowrap; }
.status { position: absolute; left: 0; bottom: 0; width: 248px; height: 32px; padding-left: 7px; line-height: 32px; background: #202020; border-radius: 0 6px 0 8px; font-size: 17.150px; white-space: nowrap; }

.scrollbar { width: 23px; height: 897px; background: #2b2b2b; border-radius: 0 12px 12px 0; display: flex; flex-direction: column; align-items: center; padding: 12px 0 11px; }
.arrow { width: 16px; height: 12px; fill: #9f9f9f; }
.arrow.down { margin-top: auto; transform: rotate(180deg); }
.thumb { width: 13px; height: 184px; margin-top: 200px; border-radius: 7px; background: #9f9f9f; }

.sidebar { width: 66px; display: flex; flex-direction: column; align-items: center; padding-top: 21px; gap: 34px; }
.rule { width: 42px; height: 1px; flex: none; background: #6c6c6c; }
.add { width: 20px; height: 20px; margin-top: 4px; }
.rule.bottom { margin-top: auto; }
.gear { margin: -14px 0 20px; }

/* Taskbar */
.taskbar {
  height: 70px; display: grid; grid-template-columns: 542px 850px 1fr; align-items: center;
  background: linear-gradient(90deg, #232225 0, #27232a 160px, #2e1e26 240px, #301727 310px, #331a1c 380px, #2c201e 430px, #28221f 540px, #27232a 680px, #2b1f28 850px, #3a1a1a 980px, #421615 1100px, #2f1e1d 1260px, #381c1c 1400px, #471912 1530px, #3b1c21 1620px, #35242a 1680px, #3e1c20 1780px, #30211f 1850px, #232225 1900px);
}
.weather { display: flex; align-items: center; position: relative; height: 70px; padding: 0 0 2px 28px; }
.weather-icon { width: 36px; height: 36px; margin-top: -1px; }
.badge { position: absolute; left: 46px; top: 7px; width: 24px; height: 24px; border-radius: 50%; background: #ff99a4; color: #111; font-size: 16px; line-height: 24px; text-align: center; }
.weather-text { display: flex; flex-direction: column; margin-left: 12px; font-size: 17.200px; line-height: 24px; }
.cond { color: #c8c4c6; }
.apps { display: flex; align-items: center; padding-bottom: 2px; }
.start { width: 36px; height: 36px; }
.search { width: 330px; height: 48px; margin: 0 4px 0 20px; border: 1px solid #625c60; border-radius: 24px; background: #454044; display: flex; align-items: center; padding: 0 17px 0 17px; font-size: 19px; color: #d2ced0; }
.search span { margin-left: 14px; }
.fish { width: 54px; height: 38px; margin-left: auto; }
.app { width: 60px; height: 60px; margin-left: 3px; margin-right: 3px; display: flex; align-items: center; justify-content: center; position: relative; border-radius: 6px; }
.app svg { width: 36px; height: 36px; }
.app.focused { background: rgba(255, 255, 255, .07); border: 1px solid rgba(255, 255, 255, .09); }
.app.running::after, .app.focused::after { content: ""; position: absolute; bottom: 1px; width: 8px; height: 5px; border-radius: 3px; background: #9c9090; }
.app.focused::after { width: 24px; bottom: 0; background: #f88264; }
.tray { display: flex; align-items: center; padding: 0 0 2px 115px; }
.tray .i24 { margin-right: 24px; }
.tray .i24:nth-child(4), .tray .vol { margin-right: 12px; }
.tray .bat { margin-right: 0; }
.clock { width: 107px; display: flex; flex-direction: column; text-align: right; font-size: 17.300px; line-height: 24px; }
.tray .bell { margin: 0 0 0 12px; }
```
